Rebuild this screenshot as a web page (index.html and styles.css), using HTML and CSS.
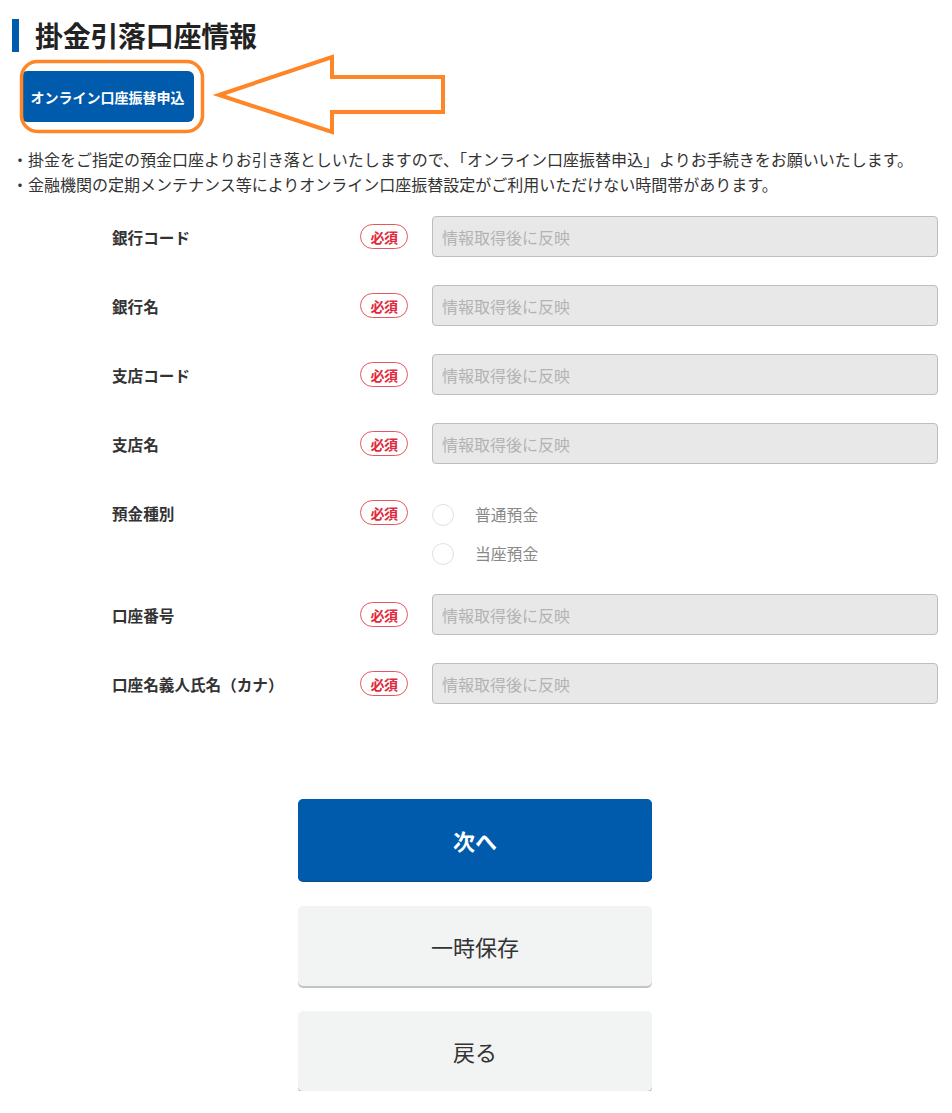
FILE: index.html
```html
<!DOCTYPE html>
<html lang="ja">
<head>
<meta charset="utf-8">
<title>掛金引落口座情報</title>
<link rel="stylesheet" href="styles.css">
</head>
<body>
<div class="page">
  <h1 class="title">掛金引落口座情報</h1>
  <div class="online-wrap">
    <button class="online-btn" type="button">オンライン口座振替申込</button>
  </div>
  <ul class="notes">
    <li>・掛金をご指定の預金口座よりお引き落としいたしますので、「オンライン口座振替申込」よりお手続きをお願いいたします。</li>
    <li>・金融機関の定期メンテナンス等によりオンライン口座振替設定がご利用いただけない時間帯があります。</li>
  </ul>

  <div class="form">
    <div class="row">
      <div class="label">銀行コード</div>
      <div class="req"><span class="badge">必須</span></div>
      <input class="field" type="text" placeholder="情報取得後に反映" readonly>
    </div>
    <div class="row">
      <div class="label">銀行名</div>
      <div class="req"><span class="badge">必須</span></div>
      <input class="field" type="text" placeholder="情報取得後に反映" readonly>
    </div>
    <div class="row">
      <div class="label">支店コード</div>
      <div class="req"><span class="badge">必須</span></div>
      <input class="field" type="text" placeholder="情報取得後に反映" readonly>
    </div>
    <div class="row">
      <div class="label">支店名</div>
      <div class="req"><span class="badge">必須</span></div>
      <input class="field" type="text" placeholder="情報取得後に反映" readonly>
    </div>
    <div class="row row-radio">
      <div class="label">預金種別</div>
      <div class="req"><span class="badge">必須</span></div>
      <div class="radios">
        <div class="radio"><span class="circle"></span><span class="rtext">普通預金</span></div>
        <div class="radio"><span class="circle"></span><span class="rtext">当座預金</span></div>
      </div>
    </div>
    <div class="row">
      <div class="label">口座番号</div>
      <div class="req"><span class="badge">必須</span></div>
      <input class="field" type="text" placeholder="情報取得後に反映" readonly>
    </div>
    <div class="row">
      <div class="label">口座名義人氏名（カナ）</div>
      <div class="req"><span class="badge">必須</span></div>
      <input class="field" type="text" placeholder="情報取得後に反映" readonly>
    </div>
  </div>

  <div class="actions">
    <button class="btn btn-primary" type="button">次へ</button>
    <button class="btn btn-gray" type="button">一時保存</button>
    <button class="btn btn-gray" type="button">戻る</button>
  </div>

  <svg class="annotation" width="460" height="140" viewBox="0 0 460 140" aria-hidden="true">
    <rect x="21.5" y="61.5" width="181" height="70" rx="16" ry="16" fill="none" stroke="#ff8526" stroke-width="3.5"/>
    <polygon points="219,95 332,57 332,77 443,77 443,112 332,112 332,132" fill="none" stroke="#ff8526" stroke-width="4" stroke-linejoin="miter"/>
  </svg>
</div>
</body>
</html>
```

FILE: styles.css
```css
html, body {
  margin: 0;
  padding: 0;
  background: #ffffff;
}

body {
  font-family: "Noto Sans CJK JP", "Noto Sans", sans-serif;
  color: #333333;
}

.page {
  position: relative;
  width: 952px;
  padding-top: 19px;
}

.title {
  margin: 0 0 0 12px;
  padding-left: 16px;
  border-left: 7px solid #005bac;
  font-size: 28px;
  line-height: 33px;
  font-weight: 700;
  color: #222222;
  letter-spacing: -0.3px;
}

.online-wrap {
  margin: 19px 0 0 21px;
}

.online-btn {
  display: block;
  width: 173px;
  height: 51px;
  padding: 0;
  border: none;
  border-radius: 6px;
  background: #005bac;
  color: #ffffff;
  font-family: "Noto Sans CJK JP", sans-serif;
  font-size: 14px;
  font-weight: 700;
  letter-spacing: 0;
}

.notes {
  list-style: none;
  margin: 25px 0 0 12px;
  padding: 0;
  font-size: 16px;
  line-height: 25px;
  color: #333333;
}

.notes li {
  margin: 0;
  white-space: nowrap;
}

.form {
  margin: 19px 0 0 112px;
  width: 826px;
}

.row {
  display: grid;
  grid-template-columns: 248px 72px 506px;
  align-items: center;
  margin-bottom: 28px;
}

.row-radio {
  align-items: start;
  margin-bottom: 21px;
}

.label {
  height: 41px;
  display: flex;
  align-items: center;
  font-size: 15.6px;
  font-weight: 700;
  color: #333333;
}

.req {
  height: 41px;
  display: flex;
  align-items: center;
}

.badge {
  box-sizing: border-box;
  width: 48px;
  height: 25px;
  border: 1.5px solid #e4575f;
  border-radius: 13px;
  display: flex;
  align-items: center;
  justify-content: center;
  color: #e02a3c;
  font-size: 14px;
  font-weight: 700;
  letter-spacing: -0.5px;
  background: #ffffff;
}

.field {
  box-sizing: border-box;
  width: 506px;
  height: 41px;
  margin: 0;
  padding: 0 0 0 9px;
  border: 1.5px solid #bdbdbd;
  border-radius: 4px;
  background: #e8e8e8;
  font-family: "Noto Sans CJK JP", sans-serif;
  font-size: 16px;
  color: #555555;
  outline: none;
}

.field::placeholder {
  color: #b3b3b3;
  opacity: 1;
}

.radios {
  padding-top: 3px;
  display: flex;
  flex-direction: column;
}

.radio {
  height: 39px;
  display: flex;
  align-items: center;
}

.circle {
  box-sizing: border-box;
  width: 22px;
  height: 22px;
  border: 1.5px solid #e0e0e0;
  border-radius: 50%;
  background: #ffffff;
  margin-right: 21px;
}

.rtext {
  font-size: 15.8px;
  color: #888888;
}

.actions {
  margin-top: 95px;
  display: flex;
  flex-direction: column;
  align-items: center;
  gap: 25px;
  padding-right: 2px;
}

.btn {
  box-sizing: border-box;
  width: 354px;
  padding: 0;
  border: none;
  border-radius: 5px;
  font-family: "Noto Sans CJK JP", sans-serif;
  font-size: 22px;
  cursor: pointer;
}

.btn-primary {
  height: 82px;
  background: #005bac;
  color: #ffffff;
  font-weight: 700;
  box-shadow: 0 1px 0 #0b4a86;
}

.btn-gray {
  height: 80px;
  background: #f2f3f3;
  color: #333333;
  font-weight: 400;
  box-shadow: 0 2px 0 #c4c4c4;
}

.annotation {
  position: absolute;
  left: 0;
  top: 0;
  pointer-events: none;
}
```
